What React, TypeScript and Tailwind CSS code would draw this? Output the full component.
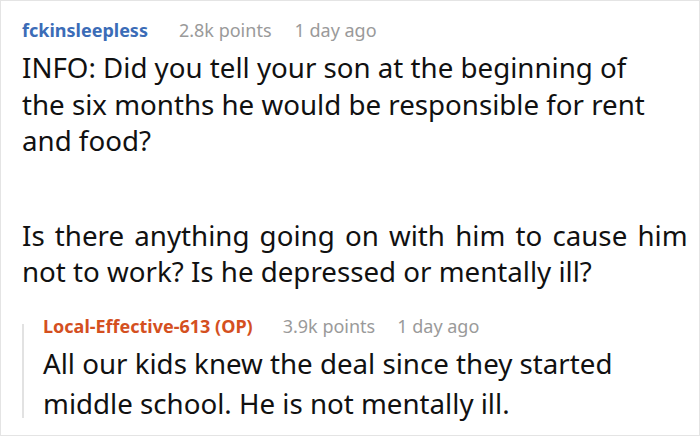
export default function App() {
  return (
    <div className="h-[436px] w-[700px] overflow-hidden border border-[#e4e4e4] bg-white font-['Noto_Sans',sans-serif] text-[#111]">
      <div className="pl-[21px] pr-[4px] pt-[15px]">
        {/* Parent comment */}
        <div className="flex items-baseline whitespace-nowrap text-[18px] leading-[28px]">
          <span className="font-bold text-[#3b6cb7]">fckinsleepless</span>
          <span className="ml-[31px] text-[#9a9a9a]">2.8k points</span>
          <span className="ml-[23px] text-[#9a9a9a]">1 day ago</span>
        </div>
        <div className="mt-[5px] whitespace-nowrap text-[27.7px] leading-[36.5px]">
          <p>
            INFO: Did you tell your son at the beginning of
            <br />
            the six months he would be responsible for rent
            <br />
            and food?
          </p>
          <p className="mt-[58px]">
            <span className="[word-spacing:3px]">Is there anything going on with him to cause him</span>
            <br />
            not to work? Is he depressed or mentally ill?
          </p>
        </div>

        {/* Reply */}
        <div className="mt-[24px] flex">
          <div className="mt-[10px] h-[94px] w-[2px] shrink-0 bg-[#e2e2e2]" />
          <div className="pl-[19px]">
            <div className="flex items-baseline whitespace-nowrap text-[18px] leading-[24px]">
              <span className="font-bold text-[#d4501f]">Local-Effective-613 (OP)</span>
              <span className="ml-[30px] text-[#9a9a9a]">3.9k points</span>
              <span className="ml-[22px] text-[#9a9a9a]">1 day ago</span>
            </div>
            <p className="mt-[5px] whitespace-nowrap text-[27.7px] leading-[40px]">
              All our kids knew the deal since they started
              <br />
              middle school. He is not mentally ill.
            </p>
          </div>
        </div>
      </div>
    </div>
  );
}
